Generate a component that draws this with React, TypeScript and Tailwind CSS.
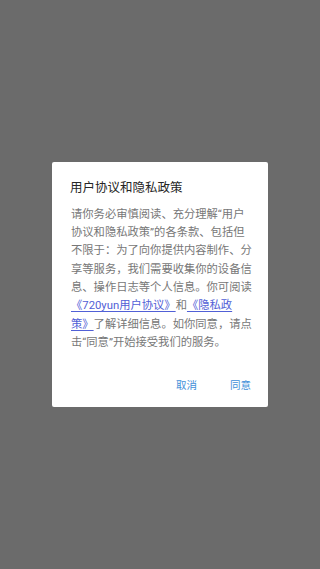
const font = { fontFamily: 'Roboto, "Noto Sans CJK SC", sans-serif' };

function Link({ children }: { children: string }) {
  return <span className="text-[#5160d6] underline underline-offset-2">{children}</span>;
}

export default function App() {
  return (
    <div
      className="flex h-[569px] w-[320px] items-center justify-center bg-[#6b6b6b]"
      style={font}
    >
      <div className="w-[216px] rounded-[2px] bg-white pb-[12px] pt-[17px]">
        <h2 className="pl-[18px] text-[12.5px] leading-[18px] text-[#262626]">
          用户协议和隐私政策
        </h2>
        <div className="mt-[9px] whitespace-nowrap pl-[19px] text-[11.3px] leading-[18.3px] text-[#777]">
          <div>请你务必审慎阅读、充分理解“用户</div>
          <div>协议和隐私政策”的各条款、包括但</div>
          <div>不限于：为了向你提供内容制作、分</div>
          <div>享等服务，我们需要收集你的设备信</div>
          <div>息、操作日志等个人信息。你可阅读</div>
          <div>
            <Link>《720yun用户协议》</Link>和<Link>《隐私政</Link>
          </div>
          <div>
            <Link>策》</Link>了解详细信息。如你同意，请点
          </div>
          <div>击“同意”开始接受我们的服务。</div>
        </div>
        <div className="mt-[25px] flex justify-end gap-[33px] pr-[17px] text-[10.5px] leading-[18px] text-[#3f8fd8]">
          <button>取消</button>
          <button>同意</button>
        </div>
      </div>
    </div>
  );
}
